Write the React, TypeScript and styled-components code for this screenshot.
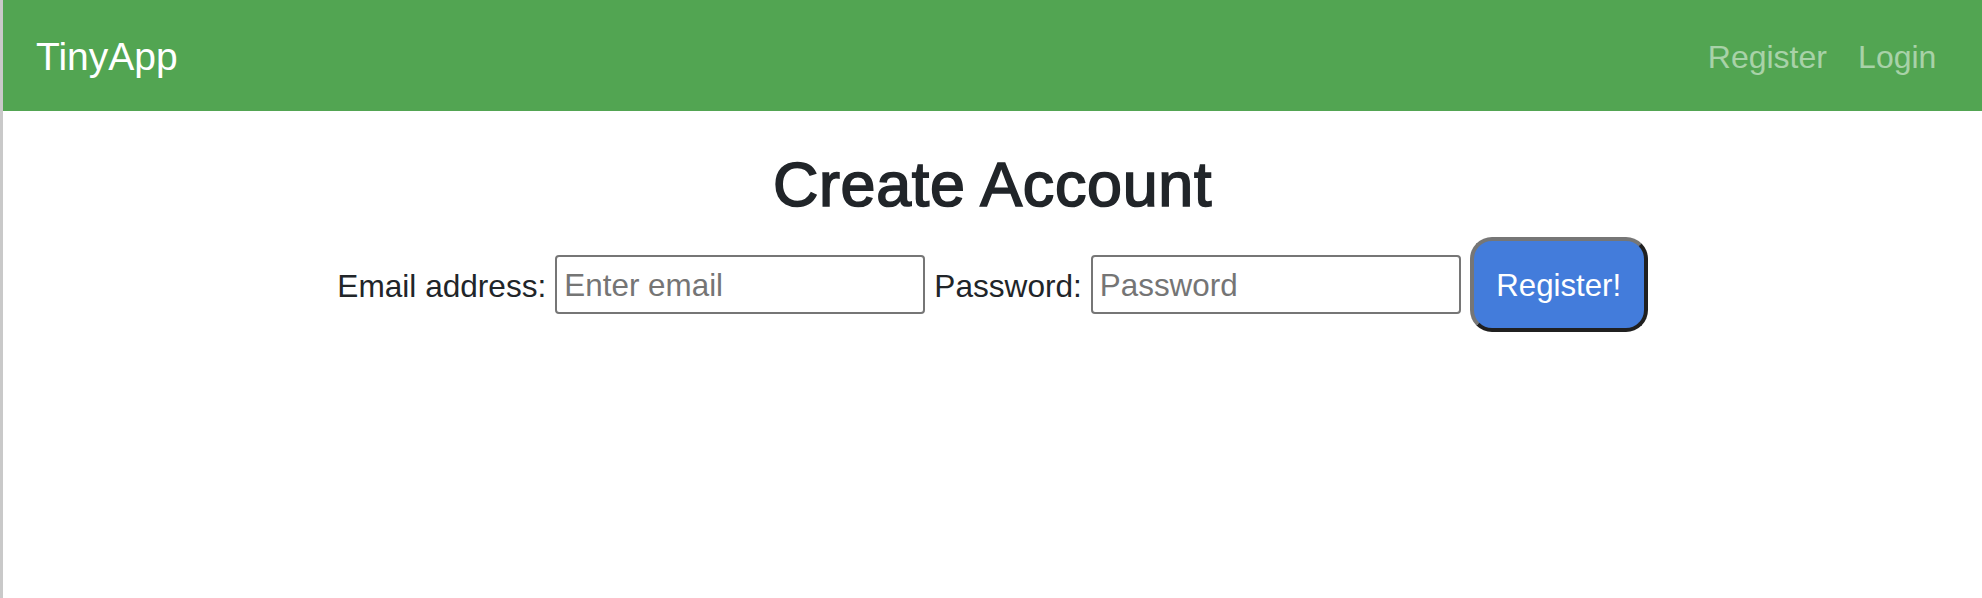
import React from "react";
import styled, { createGlobalStyle } from "styled-components";

const GlobalStyle = createGlobalStyle`
  html, body {
    margin: 0;
    padding: 0;
    background: #ffffff;
  }
  body {
    font-family: "Liberation Sans", Arial, sans-serif;
    font-size: 31.2px;
    line-height: 1.5;
    color: #212529;
    min-height: 598px;
    border-left: 3px solid #c9c9c9;
    box-sizing: border-box;
  }
  #root {
    min-height: 598px;
  }
`;

const Navbar = styled.nav`
  box-sizing: border-box;
  height: 111px;
  padding: 3px 30px 0 33px;
  background: #52a552;
  display: flex;
  align-items: center;
  justify-content: space-between;
`;

const Brand = styled.a`
  color: #ffffff;
  font-size: 39px;
  line-height: 1.5;
  text-decoration: none;
`;

const NavLinks = styled.div`
  display: flex;
  align-items: center;
`;

const NavLink = styled.a`
  color: rgba(255, 255, 255, 0.5);
  font-size: 32px;
  padding: 0 15.6px;
  text-decoration: none;
`;

const Main = styled.main`
  padding-top: 35.6px;
  text-align: center;
`;

const Title = styled.h1`
  margin: 0 0 15px;
  font-size: 62.8px;
  line-height: 1.2;
  font-weight: 400;
  letter-spacing: 0.7px;
  -webkit-text-stroke: 1.7px #212529;
  color: #212529;
`;

const Form = styled.form`
  display: flex;
  justify-content: center;
  align-items: center;
  gap: 9px;
`;

const Label = styled.label`
  font-size: 31.6px;
  color: #212529;
  padding-top: 5px;
`;

const Input = styled.input`
  box-sizing: border-box;
  width: 370px;
  height: 59px;
  padding: 4px 7px 0;
  border: 2px solid #767676;
  border-radius: 4px;
  font-family: "Liberation Sans", Arial, sans-serif;
  font-size: 31.4px;
  color: #212529;
  background: #ffffff;
  outline: none;
  &::placeholder {
    color: #757575;
  }
`;

const Button = styled.button`
  box-sizing: border-box;
  height: 95px;
  padding: 4px 22.5px 0;
  border: 4px solid;
  border-color: #767676 #202020 #202020 #767676;
  border-radius: 22px;
  background: #437cdb;
  color: #ffffff;
  font-family: "Liberation Sans", Arial, sans-serif;
  font-size: 31.2px;
  cursor: pointer;
`;

export default function App() {
  return (
    <>
      <GlobalStyle />
      <Navbar>
        <Brand href="#">TinyApp</Brand>
        <NavLinks>
          <NavLink href="#">Register</NavLink>
          <NavLink href="#">Login</NavLink>
        </NavLinks>
      </Navbar>
      <Main>
        <Title>Create Account</Title>
        <Form onSubmit={(e) => e.preventDefault()}>
          <Label htmlFor="email">Email address:</Label>
          <Input id="email" type="email" placeholder="Enter email" />
          <Label htmlFor="password">Password:</Label>
          <Input id="password" type="password" placeholder="Password" />
          <Button type="submit">Register!</Button>
        </Form>
      </Main>
    </>
  );
}
